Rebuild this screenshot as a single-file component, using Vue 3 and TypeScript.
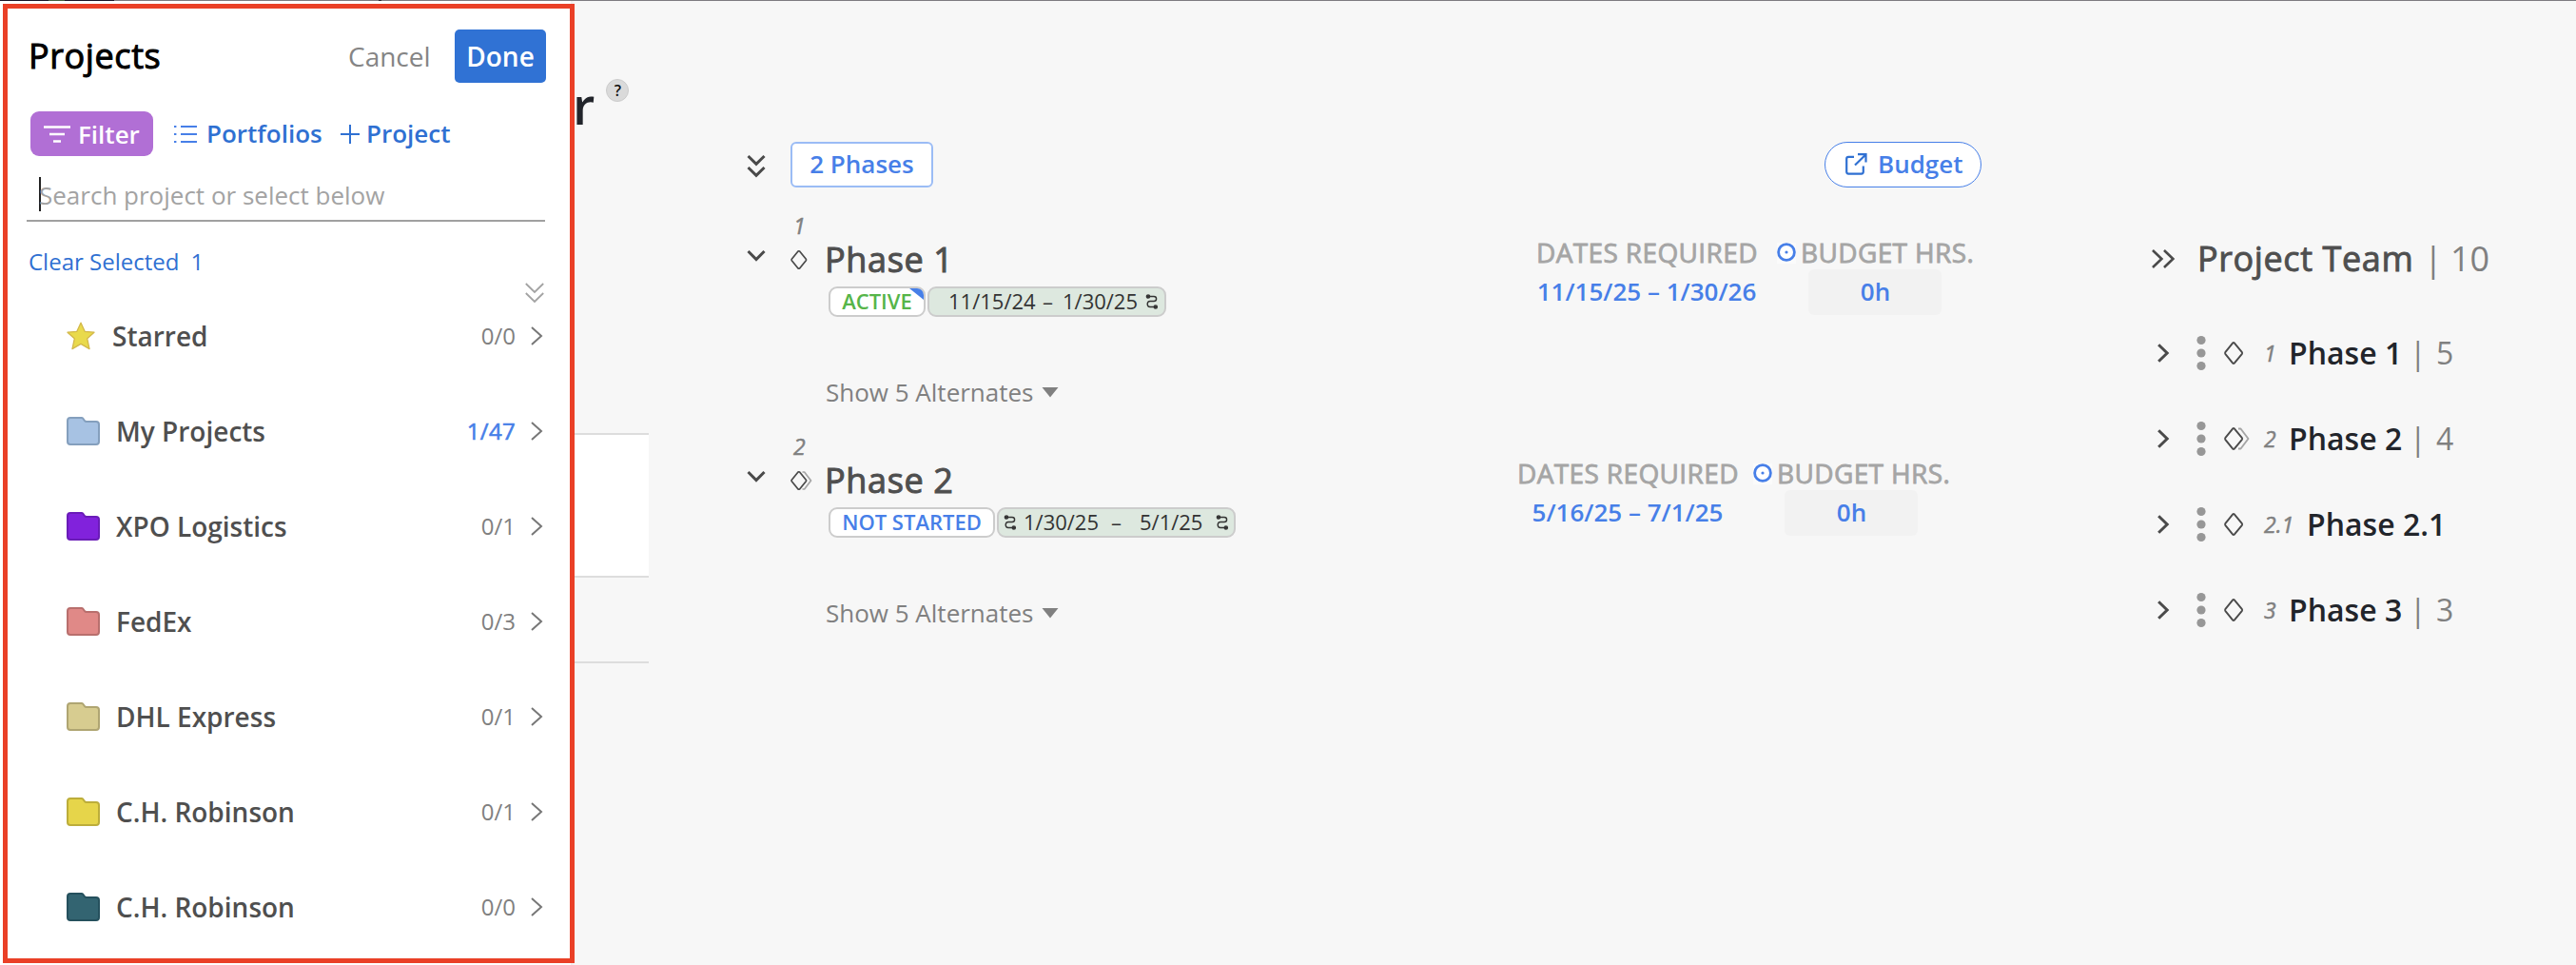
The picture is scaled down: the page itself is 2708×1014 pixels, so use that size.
<script setup lang="ts">
interface Folder {
  name: string
  count: string
  fill: string
  edge: string
  star?: boolean
  selected?: boolean
}

const folders: Folder[] = [
  { name: 'Starred', count: '0/0', fill: '#e9da4c', edge: '#d3b84a', star: true },
  { name: 'My Projects', count: '1/47', fill: '#a7c2e3', edge: '#849fbd', selected: true },
  { name: 'XPO Logistics', count: '0/1', fill: '#8122dc', edge: '#6a1cb8' },
  { name: 'FedEx', count: '0/3', fill: '#e08987', edge: '#b86f6d' },
  { name: 'DHL Express', count: '0/1', fill: '#d7cc90', edge: '#afa572' },
  { name: 'C.H. Robinson', count: '0/1', fill: '#e6d54a', edge: '#bcad3a' },
  { name: 'C.H. Robinson', count: '0/0', fill: '#336471', edge: '#25505d' },
]

interface Phase {
  num: string
  name: string
  status: string
  active: boolean
  start: string
  end: string
  required: string
  linkedStart: boolean
}

const phases: Phase[] = [
  { num: '1', name: 'Phase 1', status: 'ACTIVE', active: true, start: '11/15/24', end: '1/30/25', required: '11/15/25 – 1/30/26', linkedStart: false },
  { num: '2', name: 'Phase 2', status: 'NOT STARTED', active: false, start: '1/30/25', end: '5/1/25', required: '5/16/25 – 7/1/25', linkedStart: true },
]

const team = [
  { num: '1', name: 'Phase 1', count: '5', stacked: false },
  { num: '2', name: 'Phase 2', count: '4', stacked: true },
  { num: '2.1', name: 'Phase 2.1', count: '', stacked: false },
  { num: '3', name: 'Phase 3', count: '3', stacked: false },
]
</script>

<template>
  <div class="page">
    <div class="strip"><i class="s1"></i><i class="s2"></i><i class="s3"></i><i class="s4"></i><i class="s5"></i></div>
    <div class="body">
      <div class="drawer">
        <aside class="panel">
          <header class="head">
            <h1>Projects</h1>
            <span class="cancel">Cancel</span>
            <button class="done">Done</button>
          </header>
          <nav class="tools">
            <button class="filter">
              <svg width="28" height="18" viewBox="0 0 28 18"><path d="M0 1.5H28M6 9H22M10 16.5H18" stroke="#fff" stroke-width="2.6" /></svg>
              <span>Filter</span>
            </button>
            <a class="portfolios">
              <svg width="25" height="20" viewBox="0 0 25 20"><path d="M7 2H24M7 10H24M7 18H24" stroke="#477fe8" stroke-width="1.8" /><path d="M0 2H2.4M0 10H2.4M0 18H2.4" stroke="#477fe8" stroke-width="2.2" /></svg>
              <span>Portfolios</span>
            </a>
            <a class="add">
              <svg width="20" height="20" viewBox="0 0 20 20"><path d="M10 0V20M0 10H20" stroke="#2f70d2" stroke-width="2" /></svg>
              <span>Project</span>
            </a>
          </nav>
          <div class="search"><i class="caret"></i><span>Search project or select below</span></div>
          <div class="clear"><span>Clear Selected</span><b>1</b></div>
          <div class="collapse">
            <svg width="20" height="22" viewBox="0 0 20 22" fill="none" stroke="#a3a3a3" stroke-width="1.8"><path d="M.8 1 10 10 19.200 1M.8 11 10 20 19.200 11" /></svg>
          </div>
          <div v-for="(f, i) in folders" :key="i" class="folder" :class="{ starred: f.star }">
            <svg v-if="f.star" class="ico" width="30" height="30" viewBox="0 0 30 30"><path d="M15 1.200 19.200 10.300 29 11.200 21.700 17.800 24 28.600 15 23.400 6 28.600 8.300 17.800 1 11.200 10.800 10.300Z" :fill="f.fill" :stroke="f.edge" stroke-width="1.300" stroke-linejoin="round" /></svg>
            <svg v-else class="ico" width="35" height="30" viewBox="0 0 35 30"><path d="M4 1H15.500Q16.800 1 17.500 2L19 4.200Q19.600 5 21 5H31Q34 5 34 8V26Q34 29 31 29H4Q1 29 1 26V4Q1 1 4 1Z" :fill="f.fill" :stroke="f.edge" stroke-width="2" /></svg>
            <span class="fname">{{ f.name }}</span>
            <span class="fcount" :class="{ sel: f.selected }">{{ f.count }}</span>
            <svg class="chev" width="13" height="20" viewBox="0 0 13 20" fill="none" stroke="#777" stroke-width="2"><path d="M1 1 11 10 1 19" /></svg>
          </div>
        </aside>
      </div>

      <section class="peek">
        <div class="title"><span>r</span><em>?</em></div>
        <div class="card"></div>
        <div class="card second"></div>
      </section>

      <main class="phases">
        <div class="bar">
          <svg class="dbl" width="20" height="26" viewBox="0 0 20 26" fill="none" stroke="#4a4a4a" stroke-width="3"><path d="M1.500 2 10 10.400 18.500 2M1.500 14 10 22.400 18.500 14" /></svg>
          <button class="count">2 Phases</button>
          <button class="budget">
            <svg width="23" height="23" viewBox="0 0 23 23" fill="none" stroke="#2f70d2" stroke-width="2.200"><path d="M9 3.800H3.200Q1.200 3.800 1.200 5.800V19.600Q1.200 21.600 3.200 21.600H16.800Q18.800 21.600 18.800 19.600V13.500M13 1.200H21.500V9.500M21.300 1.500 10 12.500" /></svg>
            <span>Budget</span>
          </button>
        </div>

        <article v-for="(p, i) in phases" :key="p.num" class="phase">
          <svg class="down" width="20" height="14" viewBox="0 0 20 14" fill="none" stroke="#4a4a4a" stroke-width="3"><path d="M1.500 2 10 10.600 18.500 2" /></svg>
          <div class="mark">
            <span class="num">{{ p.num }}</span>
            <svg width="24" height="20" viewBox="0 0 24 20" fill="none" stroke-width="1.700" stroke-linejoin="round">
              <path v-if="i === 1" d="M12.500 1H14.600L21.500 10 14.600 19H12.500" stroke="#a5a5a5" />
              <path d="M8 1Q8.800.6 9.600 1L16.300 9.300Q16.800 10 16.300 10.700L9.600 19Q8.800 19.400 8 19L1.300 10.700Q.8 10 1.300 9.300Z" stroke="#4a4a4a" />
            </svg>
          </div>
          <div class="info">
            <h2>{{ p.name }}</h2>
            <div class="badges">
              <span class="status" :class="p.active ? 'on' : 'off'">{{ p.status }}<i v-if="p.active"></i></span>
              <span class="dates" :class="{ linked: p.linkedStart }">
                <svg v-if="p.linkedStart" class="link" width="12" height="16" viewBox="0 0 12 16" fill="none" stroke="#333" stroke-width="1.400"><path d="M2 2.500H8Q10.600 2.500 10.600 5 10.600 7.500 8 7.500H4Q1.200 7.500 1.200 10.500 1.200 13.500 4 13.500H9" /><circle cx="2" cy="2.500" r="1.600" fill="#333" /><circle cx="9.800" cy="13.500" r="1.600" fill="#333" /></svg>
                <span class="d1">{{ p.start }}</span><span class="dash">–</span><span class="d2">{{ p.end }}</span>
                <svg class="link" width="12" height="16" viewBox="0 0 12 16" fill="none" stroke="#333" stroke-width="1.400"><path d="M2 2.500H8Q10.600 2.500 10.600 5 10.600 7.500 8 7.500H4Q1.200 7.500 1.200 10.500 1.200 13.500 4 13.500H9" /><circle cx="2" cy="2.500" r="1.600" fill="#333" /><circle cx="9.800" cy="13.500" r="1.600" fill="#333" /></svg>
              </span>
            </div>
            <div class="alts"><span>Show 5 Alternates</span><svg width="18" height="11" viewBox="0 0 18 11"><path d="M.5 0H17.500L9 10.500Z" fill="#808080" /></svg></div>
          </div>
          <div class="req" :class="{ later: i === 1 }">
            <div class="col dcol">
              <span class="label">DATES REQUIRED</span>
              <span class="value">{{ p.required }}</span>
            </div>
            <svg class="target" width="20" height="22" viewBox="0 0 20 22"><rect width="20" height="22" fill="#fff" opacity=".5" /><circle cx="10" cy="10" r="8.400" fill="#fff" stroke="#477fe8" stroke-width="2.800" /><circle cx="10" cy="10" r="1.600" fill="#477fe8" /></svg>
            <div class="col">
              <span class="label">BUDGET HRS.</span>
              <span class="hours">0h</span>
            </div>
          </div>
        </article>
      </main>

      <section class="team">
        <div class="thead">
          <svg width="25" height="20" viewBox="0 0 25 20" fill="none" stroke="#4a4a4a" stroke-width="2.600"><path d="M1 1 10.400 10 1 19M13 1 22.400 10 13 19" /></svg>
          <h3>Project Team</h3><span class="sep">|</span><span class="total">10</span>
        </div>
        <div v-for="t in team" :key="t.num" class="trow">
          <svg class="open" width="13" height="20" viewBox="0 0 13 20" fill="none" stroke="#4a4a4a" stroke-width="3"><path d="M1.200 1.200 10.200 10 1.200 18.800" /></svg>
          <svg class="dots" width="10" height="36" viewBox="0 0 10 36" fill="#979797"><circle cx="5" cy="4.500" r="4.600" /><circle cx="5" cy="18" r="4.600" /><circle cx="5" cy="31.500" r="4.600" /></svg>
          <svg class="dia" width="28" height="24" viewBox="0 0 28 24" fill="none" stroke-width="1.900" stroke-linejoin="round">
            <path v-if="t.stacked" d="M15 1.500H17.500L25.500 12 17.500 22.500H15" stroke="#a5a5a5" />
            <path d="M9.200 1.300Q10 .8 10.800 1.300L18.900 11.200Q19.400 12 18.900 12.800L10.800 22.700Q10 23.200 9.200 22.700L1.300 12.800Q.8 12 1.300 11.200Z" stroke="#4a4a4a" />
          </svg>
          <span class="tnum" :class="{ wide: t.num.length > 1 }">{{ t.num }}</span>
          <span class="tname">{{ t.name }}</span>
          <template v-if="t.count"><span class="tsep">|</span><span class="tcount">{{ t.count }}</span></template>
        </div>
      </section>
    </div>
  </div>
</template>

<style>
body { background: #f7f7f7; overflow: hidden; }
</style>

<style scoped>
* { box-sizing: border-box; margin: 0; padding: 0; }
.page { width: 2708px; height: 1014px; overflow: hidden; background: #f7f7f7; font-family: "Open Sans", "Noto Sans", sans-serif; color: #4a4a4a; white-space: nowrap; }
svg { display: block; flex: none; overflow: visible; }
button { font-family: inherit; border: 0; display: flex; align-items: center; flex: none; }
.strip { display: flex; height: 1px; background: #7d7b80; }
.s1 { width: 51px; background: #1a1528; }
.s2 { width: 17px; background: #44613f; }
.s3 { width: 52px; background: #1a1528; }
.s4 { width: 278px; background: #7d7b80; }
.s5 { width: 3px; background: #2b2930; }
.body { display: flex; height: 1013px; }

.drawer { width: 604px; flex: none; padding: 3px 0 2px 3px; background: linear-gradient(90deg, #fff 600px, #eee 600px, #f7f7f7 604px); }
.panel { width: 601px; height: 1008px; border: 5px solid #ea4027; background: #fff; overflow: hidden; }
.head { display: flex; height: 108px; padding: 22px 0 0 22px; }
h1 { width: 336px; font-size: 36px; font-weight: 400; -webkit-text-stroke: 1px; letter-spacing: .6px; line-height: 55px; color: #000; }
.cancel { width: 112px; font-size: 28px; line-height: 57px; color: #858585; }
.done { width: 96px; height: 56px; justify-content: center; border-radius: 5px; background: #3072d4; color: #fff; font-size: 28px; font-weight: 600; }
.tools { display: flex; height: 47px; padding-left: 24px; font-size: 26px; font-weight: 600; color: #2f70d2; line-height: 47px; }
.filter { width: 129px; height: 47px; padding-left: 14px; border-radius: 9px; background: #b16fd5; color: #fff; font-size: 26px; font-weight: 600; }
.filter span { margin-left: 8px; }
.portfolios, .add { display: flex; align-items: center; }
.portfolios { width: 197px; padding-left: 22px; flex: none; }
.portfolios span { margin-left: 9px; }
.add span { margin-left: 7px; }
.search { display: flex; align-items: center; width: 545px; height: 69px; margin-left: 20px; padding: 15px 0 0 13px; border-bottom: 2px solid #a0a0a0; font-size: 26px; color: #a3a3a3; }
.caret { width: 2px; height: 36px; margin: -3px -2px 0 0; background: #222; }
.clear { display: flex; height: 36px; margin: 24px 0 0 22px; font-size: 24px; line-height: 36px; color: #2f70d2; }
.clear b { margin-left: 12px; font-weight: 400; }
.collapse { height: 31px; padding: 4px 0 0 544px; }
.folder { display: flex; align-items: center; height: 100px; padding: 0 0 24px 62px; }
.collapse + .folder { margin-top: -9px; }
.ico { width: 35px; }
.starred .ico { width: 30px; }
.fname { width: 300px; margin-left: 17px; font-size: 28px; font-weight: 600; line-height: 40px; color: #4f4f4f; }
.starred .fname { width: 302px; margin-left: 18px; }
.fcount { flex: 1; text-align: right; padding-right: 16px; font-size: 24px; line-height: 40px; color: #808080; }
.fcount.sel { color: #477fe8; -webkit-text-stroke: .6px; letter-spacing: .3px; }
.chev { margin-right: 28px; }

.peek { width: 78px; flex: none; }
.title { display: flex; height: 454px; padding-top: 72px; color: #22252b; }
.title span { margin-left: -2px; font-size: 54px; font-weight: 600; line-height: 74px; }
.title em { flex: none; width: 24px; height: 24px; margin: 10px 0 0 12px; border-radius: 50%; border: 1px solid #ccc; background: #dadada; color: #111; font-size: 16px; font-style: normal; font-weight: 600; line-height: 22px; text-align: center; }
.card { height: 152px; background: #fff; border-top: 2px solid #ddd; border-bottom: 2px solid #ddd; }
.card.second { height: 90px; background: transparent; border-top: 0; }

.phases { width: 1580px; flex: none; padding: 148px 0 0 103px; }
.bar { display: flex; height: 48px; }
.dbl { margin: 13px 26px 0 0; }
.count { width: 150px; height: 48px; justify-content: center; border: 2px solid #9bbcf5; border-radius: 6px; background: #fff; color: #477fe8; font-size: 26px; font-weight: 600; line-height: 42px; padding-bottom: 2px; }
.budget { width: 165px; height: 48px; margin-left: 937px; padding-left: 21px; border: 1px solid #477fe8; border-radius: 24px; background: #fff; color: #477fe8; font-size: 26px; font-weight: 600; padding-bottom: 2px; }
.budget span { margin-left: 11px; }
.phase { display: flex; height: 232px; }
.down { margin: 65px 26px 0 0; }
.mark { width: 36px; }
.num { display: block; height: 66px; padding: 22px 0 0 3px; font-size: 23px; font-style: italic; -webkit-text-stroke: .5px; line-height: 36px; color: #808080; }
.info { width: 670px; padding-top: 49px; }
h2 { font-size: 36px; font-weight: 400; -webkit-text-stroke: 1px; letter-spacing: .65px; line-height: 54px; color: #4f4f4f; }
.badges { display: flex; height: 32px; margin: 1px 0 0 4px; font-size: 22px; line-height: 30px; }
.status { position: relative; display: flex; justify-content: center; width: 102px; height: 32px; border: 2px solid #ccc; border-radius: 9px; background: #fff; font-weight: 600; line-height: 27px; overflow: hidden; }
.status.on { color: #56b549; }
.status.off { width: 175px; color: #477fe8; }
.status i { position: absolute; right: 0; top: 0; width: 15px; height: 12px; background: #477fe8; clip-path: polygon(0 0, 100% 0, 100% 100%); }
.dates { display: flex; align-items: center; width: 251px; height: 32px; margin-left: 2px; padding-left: 20px; border: 2px solid #ccc; border-radius: 9px; background: #dde8df; color: #333; line-height: 27px; }
.dates > span { height: 28px; }
.d1 { width: 99px; }
.dash { width: 21px; }
.d2 { width: 88px; }
.linked { padding-left: 6px; }
.linked .d1 { width: 92px; margin-left: 8px; }
.linked .dash { width: 30px; }
.linked .d2 { width: 81px; }
.alts { display: flex; align-items: center; height: 40px; margin-top: 59px; padding-left: 1px; font-size: 26px; line-height: 40px; color: #808080; }
.alts svg { margin: 1px 0 0 8px; }
.req { display: flex; padding: 47px 0 0 78px; }
.req.later { padding-left: 58px; }
.col { display: flex; flex-direction: column; }
.dcol { width: 253px; }
.label { height: 39px; font-size: 28px; -webkit-text-stroke: .8px; letter-spacing: .37px; line-height: 42px; color: #a5a5a5; }
.value { font-size: 26px; font-weight: 600; line-height: 46px; color: #477fe8; width: 232px; text-align: center; }
.later .dcol { width: 248px; }
.target { margin: 11px 5px 0 0; }
.hours { width: 140px; height: 48px; margin-left: 8px; padding-left: 1px; border-radius: 6px; background: #f2f2f2; color: #477fe8; font-size: 26px; font-weight: 600; line-height: 47px; text-align: center; }

.team { flex: 1; padding-top: 245px; }
.thead { display: flex; align-items: center; height: 52px; font-size: 36px; line-height: 52px; color: #808080; }
h3 { width: 238px; margin-left: 23px; font-size: 36px; font-weight: 400; -webkit-text-stroke: .9px; letter-spacing: .6px; color: #4f4f4f; }
.sep { width: 28px; }
.trow { display: flex; align-items: center; height: 90px; padding-left: 6px; font-size: 32px; line-height: 44px; }
.thead + .trow { margin-top: 28px; }
.dots { margin-left: 28px; }
.dia { margin-left: 19px; }
.tnum { width: 26px; margin-left: 14px; font-size: 23px; font-style: italic; -webkit-text-stroke: .5px; color: #808080; }
.tnum.wide { width: 45px; }
.tname { width: 127px; font-size: 32px; font-weight: 600; color: #22252b; }
.tsep { width: 28px; color: #808080; }
.tcount { color: #808080; }
</style>
